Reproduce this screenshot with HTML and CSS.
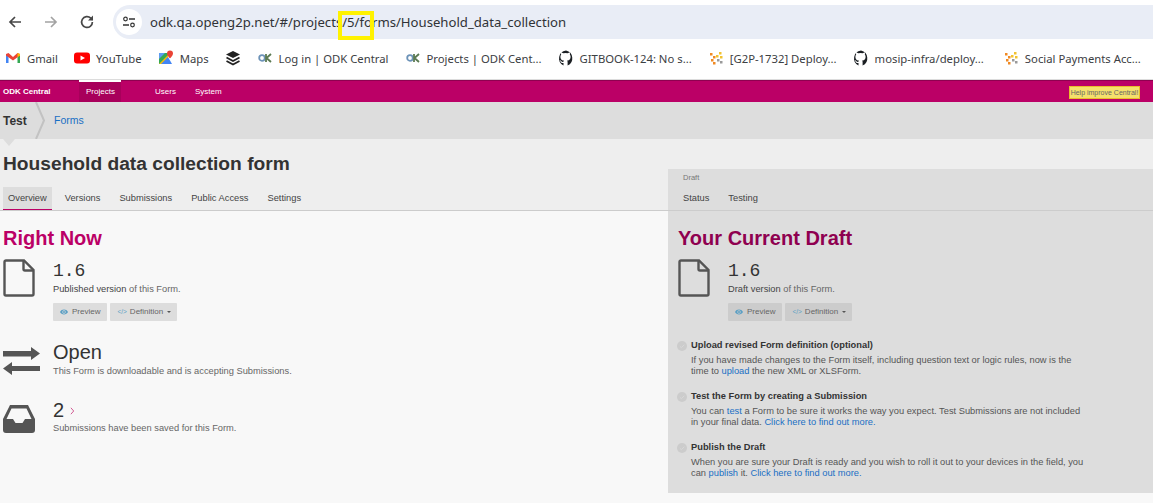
FILE: index.html
```html
<!DOCTYPE html>
<html lang="en">
<head>
<meta charset="utf-8">
<title>Household data collection form</title>
<link rel="stylesheet" href="styles.css">
</head>
<body>
<div class="toolbar">
  <svg class="tool" viewBox="0 0 16 16"><path d="M14 8H3M8 3L3 8l5 5" fill="none" stroke="#474747" stroke-width="1.7"/></svg>
  <svg class="tool" viewBox="0 0 16 16"><path d="M2 8h11M8 3l5 5-5 5" fill="none" stroke="#a3a3a3" stroke-width="1.7"/></svg>
  <svg class="tool" viewBox="0 0 16 16"><path d="M13.4 8a5.4 5.4 0 1 1-1.6-3.8L13.6 6" fill="none" stroke="#474747" stroke-width="1.7"/><path d="M14 1.6V6.6H9z" fill="#474747"/></svg>
  <div class="urlbar">
    <span class="site">
      <svg viewBox="0 0 14 14" width="14" height="14"><circle cx="3.5" cy="4" r="1.8" fill="none" stroke="#333" stroke-width="1.2"/><path d="M7 4h6M1 10h6" stroke="#333" stroke-width="1.3"/><circle cx="10.5" cy="10" r="1.8" fill="none" stroke="#333" stroke-width="1.2"/></svg>
    </span>
    <span class="url">odk.qa.openg2p.net/#/projects/5/forms/Household_data_collection</span>
    <span class="mark"></span>
  </div>
</div>
<div class="bookmarks">
  <span class="bm"><svg viewBox="0 0 16 16"><path d="M1 4v9h2.500V6.500z" fill="#4285f4"/><path d="M15 4v9h-2.500V6.500z" fill="#34a853"/><path d="M1 4l2.500-1L8 7l4.500-4L15 4v1.500L8 10.500 1 5.500z" fill="#ea4335"/><path d="M12.500 3L15 4v1.500l-2.500 1.800z" fill="#fbbc04"/></svg>Gmail</span>
  <span class="bm"><svg viewBox="0 0 16 16"><rect y="2.500" width="16" height="11" rx="3" fill="#f00"/><path d="M6.500 5.500v5L11 8z" fill="#fff"/></svg>YouTube</span>
  <span class="bm"><svg viewBox="0 0 16 16"><path d="M1 3h9v11H1z" fill="#34a853"/><path d="M1 14l9-9v9z" fill="#fbbc04"/><path d="M3 14l7-7 4 7z" fill="#4285f4"/><path d="M1 3h6L1 9z" fill="#5c9cf0"/><path d="M12 0.500a3 3 0 0 1 3 3c0 2-3 5-3 5s-3-3-3-5a3 3 0 0 1 3-3z" fill="#ea4335"/></svg>Maps</span>
  <span class="bm"><svg viewBox="0 0 16 16"><path d="M8 1l7 3.500L8 8 1 4.500z" fill="#222"/><path d="M1.500 7.500L8 11l6.500-3.500M1.500 11L8 14.500 14.500 11" fill="none" stroke="#222" stroke-width="1.800"/></svg></span>
  <span class="bm"><svg viewBox="0 0 16 16"><circle cx="5" cy="8" r="2.800" fill="none" stroke="#6d93b8" stroke-width="1.800"/><path d="M9 4v8M9.500 8L14 4M9.500 8l4.500 4" stroke="#5b7a52" stroke-width="1.800"/></svg>Log in | ODK Central</span>
  <span class="bm"><svg viewBox="0 0 16 16"><circle cx="5" cy="8" r="2.800" fill="none" stroke="#6d93b8" stroke-width="1.800"/><path d="M9 4v8M9.500 8L14 4M9.500 8l4.500 4" stroke="#5b7a52" stroke-width="1.800"/></svg>Projects | ODK Cent...</span>
  <span class="bm"><svg viewBox="0 0 16 16"><path d="M8 0.500a8 8 0 0 0-2.500 15.100v-2.700c-2.200.5-2.700-1-2.700-1-.4-.9-.9-1.200-.9-1.200-.7-.5.100-.5.100-.5.800.1 1.200.8 1.200.8.700 1.200 1.900.9 2.300.7.100-.5.300-.9.500-1.100-1.800-.2-3.600-.9-3.600-3.900 0-.9.300-1.600.8-2.100-.1-.2-.4-1 .1-2.100 0 0 .7-.2 2.200.8a7.500 7.500 0 0 1 4 0c1.500-1 2.200-.8 2.200-.8.500 1.100.200 1.900.100 2.100.5.500.8 1.200.8 2.100 0 3-1.800 3.700-3.600 3.900.3.300.6.700.6 1.500v3.500A8 8 0 0 0 8 .5z" fill="#1b1f23"/></svg>GITBOOK-124: No s...</span>
  <span class="bm"><svg viewBox="0 0 16 16"><g fill="#f08a24"><rect x="2" y="3" width="2.500" height="2.500"/><rect x="5" y="6" width="2.500" height="2.500"/><rect x="3" y="9" width="2.500" height="2.500"/><rect x="5" y="12" width="2.500" height="2.500"/></g><g fill="#f2c230"><rect x="11" y="2" width="2.500" height="2.500"/><rect x="8" y="5" width="2.500" height="2.500"/><rect x="12" y="6" width="2.500" height="2.500"/></g><g fill="#9a9a9a"><rect x="9" y="9" width="2.500" height="2.500"/><rect x="12" y="11" width="2.500" height="2.500"/></g></svg>[G2P-1732] Deploy...</span>
  <span class="bm"><svg viewBox="0 0 16 16"><path d="M8 0.500a8 8 0 0 0-2.500 15.100v-2.700c-2.200.5-2.700-1-2.700-1-.4-.9-.9-1.200-.9-1.200-.7-.5.100-.5.100-.5.800.1 1.200.8 1.200.8.700 1.200 1.900.9 2.300.7.100-.5.300-.9.500-1.100-1.800-.2-3.600-.9-3.600-3.900 0-.9.300-1.600.8-2.100-.1-.2-.4-1 .1-2.100 0 0 .7-.2 2.200.8a7.500 7.500 0 0 1 4 0c1.500-1 2.200-.8 2.200-.8.500 1.100.200 1.900.100 2.100.5.500.8 1.200.8 2.100 0 3-1.800 3.700-3.600 3.900.3.300.6.700.6 1.500v3.500A8 8 0 0 0 8 .5z" fill="#1b1f23"/></svg>mosip-infra/deploy...</span>
  <span class="bm last"><svg viewBox="0 0 16 16"><g fill="#f08a24"><rect x="2" y="3" width="2.500" height="2.500"/><rect x="5" y="6" width="2.500" height="2.500"/><rect x="3" y="9" width="2.500" height="2.500"/><rect x="5" y="12" width="2.500" height="2.500"/></g><g fill="#f2c230"><rect x="11" y="2" width="2.500" height="2.500"/><rect x="8" y="5" width="2.500" height="2.500"/><rect x="12" y="6" width="2.500" height="2.500"/></g><g fill="#9a9a9a"><rect x="9" y="9" width="2.500" height="2.500"/><rect x="12" y="11" width="2.500" height="2.500"/></g></svg>Social Payments Acc...</span>
</div>

<nav class="topnav">
  <span class="brand">ODK Central</span>
  <span class="navitem active">Projects</span>
  <span class="navitem users">Users</span>
  <span class="navitem">System</span>
  <span class="help">Help improve Central!</span>
</nav>

<div class="crumbs">
  <span class="crumb-test">Test</span>
  <svg class="chev" viewBox="0 0 10 37" width="10" height="37"><path d="M1 0l8 18.500L1 37" fill="none" stroke="#c2c2c2" stroke-width="2"/></svg>
  <a class="crumb-link">Forms</a>
  <span class="pointer"></span>
</div>

<div class="page">
  <section class="left">
    <header class="head">
      <h1>Household data collection form</h1>
      <div class="tabs">
        <span class="tab on">Overview</span>
        <span class="tab">Versions</span>
        <span class="tab">Submissions</span>
        <span class="tab">Public Access</span>
        <span class="tab">Settings</span>
      </div>
    </header>
    <div class="content">
      <h2 class="rn">Right Now</h2>
      <div class="row r-ver">
        <svg class="ic" viewBox="0 0 32 38" width="32" height="38"><path d="M1.500 3a1.500 1.500 0 0 1 1.500-1.500h18L30.500 11v24a1.500 1.500 0 0 1-1.500 1.500H3A1.500 1.500 0 0 1 1.500 35z" fill="none" stroke="#555" stroke-width="2.400"/><path d="M20.500 2v8a1.500 1.500 0 0 0 1.500 1.500h8.500" fill="none" stroke="#555" stroke-width="2.400"/></svg>
        <div class="info">
          <div class="ver">1.6</div>
          <p class="sub"><b>Published version</b> of this Form.</p>
          <div class="btns">
            <span class="btn"><svg class="bi" viewBox="0 0 12 8" width="8" height="6"><path fill-rule="evenodd" d="M0 4c2-5 10-5 12 0-2 5-10 5-12 0zM6 1.500a2.500 2.500 0 1 0 0 5 2.500 2.500 0 0 0 0-5z" fill="#5a9fc4"/><circle cx="6" cy="4" r="1.500" fill="#5a9fc4"/></svg>Preview</span>
            <span class="btn"><span class="code">&lt;/&gt;</span>Definition<span class="caret"></span></span>
          </div>
        </div>
      </div>
      <div class="row r-open">
        <svg class="ic" viewBox="0 0 37 28" width="37" height="28"><path d="M0 4h28V0l9 6.500-9 6.500V9.500H0z" fill="#555"/><path d="M37 19H9v-4l-9 6.500L9 28v-4h28z" fill="#555"/></svg>
        <div class="info">
          <div class="big">Open</div>
          <p class="sub">This Form is downloadable and is accepting Submissions.</p>
        </div>
      </div>
      <div class="row r-subs">
        <svg class="ic" viewBox="0 0 32 28" width="32" height="28"><path d="M7 0h18l7 14v11a3 3 0 0 1-3 3H3a3 3 0 0 1-3-3V14zM8.500 3.500L3.500 14H10l2.500 4h7l2.500-4h6.500l-5-10.500z" fill-rule="evenodd" fill="#555"/></svg>
        <div class="info">
          <div class="big num">2 <svg viewBox="0 0 6 10" width="5" height="8"><path d="M1 1l3.500 4L1 9" fill="none" stroke="#d0558f" stroke-width="1.200"/></svg></div>
          <p class="sub">Submissions have been saved for this Form.</p>
        </div>
      </div>
    </div>
  </section>

  <section class="right">
    <div class="draft">
      <div class="dhead">
        <div class="dlabel">Draft</div>
        <div class="tabs dtabs">
          <span class="tab">Status</span>
          <span class="tab">Testing</span>
        </div>
      </div>
      <div class="dbody">
        <h2 class="cd">Your Current Draft</h2>
        <div class="row r-ver">
          <svg class="ic" viewBox="0 0 32 38" width="32" height="38"><path d="M1.500 3a1.500 1.500 0 0 1 1.500-1.500h18L30.500 11v24a1.500 1.500 0 0 1-1.500 1.500H3A1.500 1.500 0 0 1 1.500 35z" fill="none" stroke="#555" stroke-width="2.400"/><path d="M20.500 2v8a1.500 1.500 0 0 0 1.500 1.500h8.500" fill="none" stroke="#555" stroke-width="2.400"/></svg>
          <div class="info">
            <div class="ver">1.6</div>
            <p class="sub"><b>Draft version</b> of this Form.</p>
            <div class="btns">
              <span class="btn dark"><svg class="bi" viewBox="0 0 12 8" width="8" height="6"><path fill-rule="evenodd" d="M0 4c2-5 10-5 12 0-2 5-10 5-12 0zM6 1.500a2.500 2.500 0 1 0 0 5 2.500 2.500 0 0 0 0-5z" fill="#5a9fc4"/><circle cx="6" cy="4" r="1.500" fill="#5a9fc4"/></svg>Preview</span>
              <span class="btn dark"><span class="code">&lt;/&gt;</span>Definition<span class="caret"></span></span>
            </div>
          </div>
        </div>
        <ol class="steps">
          <li class="step"><svg class="dot" viewBox="0 0 10 10" width="10" height="10"><circle cx="5" cy="5" r="5" fill="#ccc"/><path d="M2.800 5.200l1.600 1.500 2.900-3" fill="none" stroke="#d8d8d8" stroke-width="1"/></svg><div><h3>Upload revised Form definition (optional)</h3><p>If you have made changes to the Form itself, including question text or logic rules, now is the<br>time to <a>upload</a> the new XML or XLSForm.</p></div></li>
          <li class="step"><svg class="dot" viewBox="0 0 10 10" width="10" height="10"><circle cx="5" cy="5" r="5" fill="#ccc"/><path d="M2.800 5.200l1.600 1.500 2.900-3" fill="none" stroke="#d8d8d8" stroke-width="1"/></svg><div><h3>Test the Form by creating a Submission</h3><p>You can <a>test</a> a Form to be sure it works the way you expect. Test Submissions are not included<br>in your final data. <a>Click here to find out more.</a></p></div></li>
          <li class="step"><svg class="dot" viewBox="0 0 10 10" width="10" height="10"><circle cx="5" cy="5" r="5" fill="#ccc"/><path d="M2.800 5.200l1.600 1.500 2.900-3" fill="none" stroke="#d8d8d8" stroke-width="1"/></svg><div><h3>Publish the Draft</h3><p>When you are sure your Draft is ready and you wish to roll it out to your devices in the field, you<br>can <a>publish</a> it. <a>Click here to find out more.</a></p></div></li>
        </ol>
      </div>
    </div>
  </section>
</div>
</body>
</html>
```

FILE: styles.css
```css
* { box-sizing: border-box; }
html, body { margin: 0; padding: 0; }
body {
  width: 1153px;
  height: 503px;
  overflow: hidden;
  background: #f8f8f8;
  font-family: "Liberation Sans", Arial, sans-serif;
  color: #333;
}

.toolbar {
  height: 39px;
  background: #fff;
  display: flex;
  align-items: flex-end;
  padding-left: 7px;
}
.tool { width: 16px; height: 16px; margin: 0 20px 9px 0; flex: none; }
.urlbar {
  position: relative;
  flex: 1;
  height: 34px;
  margin-left: -2px;
  background: #e9edf6;
  border-radius: 17px 0 0 17px;
  display: flex;
  align-items: center;
  padding-left: 3px;
}
.site {
  width: 26px;
  height: 26px;
  border-radius: 50%;
  background: #fff;
  display: flex;
  align-items: center;
  justify-content: center;
  flex: none;
}
.url {
  margin-left: 8px;
  font: 13.150px "Noto Sans", sans-serif;
  color: #303337;
  white-space: nowrap;
}
.mark {
  position: absolute;
  left: 225px;
  top: 6px;
  width: 36px;
  height: 29px;
  border: 4px solid #fff200;
}

.bookmarks {
  height: 41px;
  background: #fff;
  border-bottom: 1px solid #dcdcdc;
  display: flex;
  align-items: center;
  gap: 16px;
  padding: 0 0 2px 5px;
  overflow: hidden;
}
.bm {
  display: flex;
  align-items: center;
  gap: 6px;
  font: 11.300px "Noto Sans", sans-serif;
  color: #3c4043;
  white-space: nowrap;
  flex: none;
}
.bm svg { width: 16px; height: 16px; flex: none; }
.bm.last { margin-left: 3px; }

.topnav {
  height: 22px;
  background: #bb0066;
  border-top: 1px solid #8f0050;
  display: flex;
  align-items: stretch;
  position: relative;
  font-size: 8px;
  color: #fff;
}
.brand { font-weight: bold; margin-left: 3px; width: 76px; line-height: 21px; font-size: 8px; }
.navitem { line-height: 21px; padding: 0 7px; margin-right: 20px; }
.navitem.users { margin-right: 5px; }
.navitem.active {
  width: 42px;
  background: #a8005b;
  border-top: 2px solid #fff;
  line-height: 19px;
  margin-top: -1px;
  margin-right: 27px;
  height: 22px;
}
.help {
  position: absolute;
  left: 1069px;
  top: 5px;
  width: 71px;
  height: 13px;
  background: #f5e06c;
  border: 1px solid #e8bc2c;
  color: #666;
  font-size: 7px;
  line-height: 11px;
  text-align: center;
  white-space: nowrap;
}

.crumbs {
  height: 37px;
  background: #ddd;
  display: flex;
  align-items: center;
  position: relative;
}
.crumb-test { font-size: 12px; font-weight: bold; margin-left: 3px; width: 32px; color: #333; }
.chev { flex: none; }
.crumb-link { margin: 0 0 2px 9px; font-size: 10.500px; color: #1a6fc4; }
.pointer {
  position: absolute;
  left: 3px;
  top: 100%;
  border-style: solid;
  border-width: 7px 6px 0;
  border-color: #ddd transparent transparent;
  z-index: 2;
}

.page { display: grid; grid-template-columns: 668px 485px; }

.head { height: 72px; background: #eee; border-bottom: 1px solid #ccc; padding: 13px 0 0 3px; }
h1 { margin: 0; font-size: 19.200px; line-height: 23px; font-weight: bold; color: #333; }
.tabs { display: flex; margin-top: 12px; font-size: 9.300px; color: #444; }
.tab { line-height: 23px; padding: 0 5px; margin-right: 9px; }
.tab.on { background: #ddd; border-bottom: 1px solid #bb0066; height: 23px; margin-right: 8px; }

.content { padding: 16px 0 0 3px; }
h2 { margin: 0; font-size: 20px; line-height: 23px; font-weight: bold; }
.rn { color: #bb0066; }
.cd { color: #8f0050; }

.row { display: flex; }
.ic { flex: none; }
.info { margin-left: 18px; }
.r-ver { margin-top: 9px; min-height: 62px; }
.ver { font: 18px/20px "Liberation Mono", monospace; color: #333; margin-top: 2px; }
.sub { margin: 0; font-size: 9.300px; line-height: 12px; color: #666; margin-top: 2px; }
.sub b { font-weight: normal; color: #444; }
.btns { display: flex; gap: 3px; margin-top: 8px; }
.btn {
  height: 18px;
  background: #ddd;
  border-radius: 1px;
  font-size: 8px;
  line-height: 18px;
  color: #666;
  padding: 0 7px;
  display: flex;
  align-items: center;
  white-space: nowrap;
}
.btn.dark { background: #ccc; }
.bi { margin-right: 4px; }
.code { color: #5a9fc4; margin-right: 3px; font-size: 6.500px; }
.caret {
  margin: 0 -1px 0 4px;
  border-style: solid;
  border-width: 2px 2px 0;
  border-color: #555 transparent transparent;
}
.r-open { margin-top: 19px; }
.r-open .ic { margin-top: 7px; }
.r-open .info { margin-left: 13px; }
.big { font-size: 20px; line-height: 24px; color: #333; }
.r-open .sub { margin-top: 1px; }
.r-subs .sub { margin-top: 0; }
.r-subs { margin-top: 21px; }
.r-subs .ic { margin-top: 7px; }
.num svg { vertical-align: 2px; }

.right { padding-top: 30px; background: linear-gradient(#eee 30px, #f8f8f8 30px); }
.draft { height: 324px; background: #ddd; }
.dhead { height: 42px; border-bottom: 1px solid #ccc; padding: 4px 0 0 10px; }
.dlabel { font-size: 7.500px; line-height: 10px; color: #777; padding-left: 5px; }
.dtabs { margin-top: 3px; }
.dtabs .tab { line-height: 24px; }
.dbody { padding: 16px 0 0 10px; }
.steps { list-style: none; margin: 18px 0 0; padding: 0; }
.step { display: flex; margin-bottom: 13px; margin-left: -1px; }
.dot { flex: none; margin: 2px 4px 0 0; }
h3 { margin: 0; font-size: 9.300px; line-height: 12px; color: #333; font-weight: bold; }
.step p { margin: 4px 0 0; font-size: 9.300px; line-height: 11px; color: #555; white-space: nowrap; }
.step a { color: #1a6fc4; }
```
